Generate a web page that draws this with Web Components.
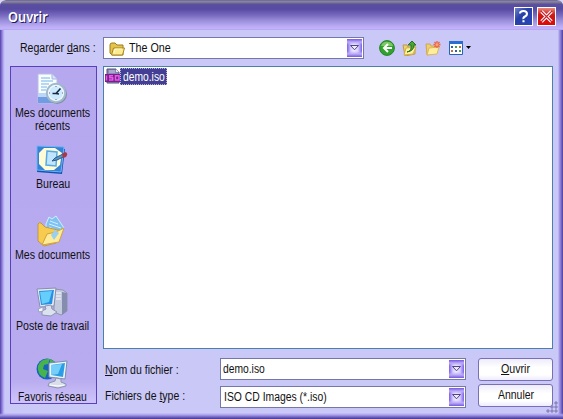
<!DOCTYPE html>
<html lang="fr"><head><meta charset="utf-8"><title>Ouvrir</title>
<style>html,body{margin:0;width:563px;height:419px;overflow:hidden;background:#d9d6f5}body{font:12.5px/13px "Liberation Sans",Arial,sans-serif;color:#111}</style></head><body>
<open-dialog></open-dialog>
<script>
const make=(name,html,init)=>customElements.define(name,class extends HTMLElement{
 connectedCallback(){if(this.shadowRoot)return;this.attachShadow({mode:'open'}).innerHTML=typeof html==='function'?html(this):html;if(init)init(this,this.shadowRoot)}
});
/* Text condensed to a given pixel width. */
make('fit-text','<style>:host{display:inline-block;white-space:nowrap;height:13px;text-align:left}span{display:inline-block;transform-origin:0 50%}</style><span><slot></slot></span>',(e,r)=>{
 const w=+e.getAttribute('w'),s=r.querySelector('span');e.style.width=w+'px';
 s.style.transform=`scaleX(${w/s.offsetWidth})`;
});
const icons={
recent:`<svg viewBox="0 0 32 32"><path d="M2 1h14l5 5v24H2z" fill="#fafdff" stroke="#b5bfe0"/><path d="M2 24h19v6H2z" fill="#6f9ce2"/><path d="M2 20h19v4H2z" fill="#bcd6f6"/><path d="M16 1v5h5" fill="#d5e5fa" stroke="#a5b7dd"/><path d="M5 5h9M5 8h12M5 11h8M5 14h6M5 17h5" stroke="#9fcbf0" stroke-width="1.5"/><circle cx="21" cy="21" r="10" fill="#828da5"/><circle cx="20" cy="20" r="9.2" fill="#eef7ff" stroke="#a0b9cd" stroke-width="2"/><circle cx="20" cy="20" r="6.7" fill="#cceafd"/><path d="M20 13v1m0 12v1m-7-7h1m12 0h1" stroke="#668"/><path d="M24.500 15.500 20 20.500h-3.500M20 20.500l3 .5" fill="none" stroke="#162a46" stroke-width="1.600"/></svg>`,
desk:`<svg viewBox="0 0 32 32"><path d="m2 3 27 2-3 25L1 28z" fill="#1155b0"/><path d="m1 2 27 1-3 25L1 26z" fill="#3581d8" stroke="#6fb4f3"/><path d="M8 4h11l7 5-2 12-6 5H9l-6-6V9z" fill="#fffbd2"/><path d="m11 7 10 1-1 14-10-1z" fill="#bfe5ff" stroke="#57a9e6" stroke-width="1.500"/><path d="m16 17 3-3 8-4 2 2-8 4z" fill="#5797cc" stroke="#315987"/><path d="m26 10 3-2q4 1 1 5l-3 1z" fill="#a43949"/></svg>`,
docs:`<svg viewBox="0 0 32 32"><path d="m10 9 3-7 3 2 4-3 8 12-9 11-9-3z" fill="#7fc1f0" stroke="#d1efff"/><path d="m14 6 8 3m-9 0 12 4m-12-1 11 5" stroke="#d6f0ff"/><path d="M2 9q1-2 3-1l4 4 17 4-6 12-12 3-6-5z" fill="#f6cb4e" stroke="#bd974f"/><path d="m6 30 5-11 9-2 8-4-5 14z" fill="#ffeb98" stroke="#d0a33b"/><path d="m15 20 4-5 4 3-5 7z" fill="#99cff0"/></svg>`,
pc:`<svg viewBox="0 0 32 32"><path d="m18 3 9 1 4 3v18l-6 4-7-3z" fill="#c4cade" stroke="#8e94b2"/><path d="m26 6 5 1v18l-5 4z" fill="#858dae"/><path d="M20 7h5m-5 3h5m-5 3h5" stroke="#f7f7ff"/><path d="m1 3 19-1-2 18-14 1z" fill="#e5eaf6" stroke="#878fae"/><path d="m3 5 15-1-2 14-11 1z" fill="#2490e4"/><path d="m4 6 12-1-3 11-7 2z" fill="#65cefa"/><path d="m9 20 6-1 1 4 5 3-6 4-9-1v-4l4-2z" fill="#dbe1ef" stroke="#8b96b0"/><path d="m2 23 5-2v4l-4 1z" fill="#f5f8ff" stroke="#99a2bf"/></svg>`,
net:`<svg viewBox="0 0 32 32"><circle cx="11" cy="12" r="10.500" fill="#1763bd"/><path d="M2 9q3-8 12-7l-2 5-4 1-1 4 5 2-3 7Q1 18 2 9zM14 2l5 3-5 3z" fill="#47b34d"/><path d="m13 6 18-2-2 18-16-2z" fill="#edf5fc" stroke="#7690ad"/><path d="m15 8 14-2-2 14-12-2z" fill="#2c9de4"/><path d="m15 8 11-1-4 10-7 1z" fill="#75cff8"/><path d="m20 21 5 1v3l5 2v2l-8 2-10-2 1-3 6-2z" fill="#d8deeb" stroke="#8b95ad"/><path d="m14 28 8 1 6-1" fill="none" stroke="#fff"/></svg>`,
folder:`<svg viewBox="0 0 16 16"><path d="M1 4q0-2 2-2h3l2 2h6v10H3L1 12z" fill="#e5c548" stroke="#9c7c25"/><path d="m2.500 14 2-7h11l-2 7z" fill="#fdeb8d" stroke="#a98327"/><path d="m5 12 1-4h7" stroke="#fff9ce" fill="none"/></svg>`,
iso:`<svg viewBox="0 0 16 16"><path d="M2 1h9l3 3v11H2z" fill="#8b86b3" stroke="#55517e"/><path d="M4 2h6v3H4z" fill="#aaa9cd"/><path d="M11 1v3h3" fill="#e6e4fb"/><path d="M0 6h16v8H0z" fill="#76208a"/><path d="M1.500 7.500v5M8 7.800H4.700v2h3v2.200H4M10.500 7.800H14V12h-3.500z" fill="none" stroke="#e95aeb" stroke-width="1.500"/></svg>`,
back:`<svg viewBox="0 0 16 16"><circle cx="8" cy="8" r="7.400" fill="#32a22e" stroke="#268426"/><path d="M2 6q2-5 7-4 4 0 5 4" fill="#78cb63"/><path d="M13 8H5m4-4L5 8l4 4" fill="none" stroke="#fff" stroke-width="2"/></svg>`,
up:`<svg viewBox="0 0 16 16"><path d="M1 5h4l1 2h7v7l-10 2z" fill="#ecd468" stroke="#c09a3b"/><path d="m2 15 2-7 10-1-3 7z" fill="#fff1a0" stroke="#cfaf49"/><path d="M5 12q5-1 4-7H6l4-4 4 4h-2q0 6-7 7z" fill="#49a62e" stroke="#28711c"/></svg>`,
neu:`<svg viewBox="0 0 16 16"><path d="M1 4h4l1 2h6v7l-10 2z" fill="#efcf69" stroke="#d0a650"/><path d="m2 15 2-7 10-1-2 7z" fill="#ffed9e" stroke="#dbb75e"/><path d="M12 1v7M8.500 4.500h7M9.500 2l5 5m0-5-5 5" stroke="#eb6247" stroke-width="1.300"/><circle cx="12" cy="4.500" r="1.500" fill="#f9a46d"/></svg>`,
view:`<svg viewBox="0 0 24 16"><path d="M1.500 1.500h13v13h-13z" fill="#fff" stroke="#2265bb"/><path d="M1 1h14v3H1z" fill="#286ed0"/><path d="M3 6h2v2H3zM7 10h2v2H7z" fill="#385ca0"/><path d="M7 6h2v2H7zM11 10h2v2h-2z" fill="#459e5d"/><path d="M11 6h2v2h-2zM3 10h2v2H3z" fill="#b27744"/><path d="M18 6h5L20.500 9z" fill="#000"/></svg>`,
help:`<svg viewBox="0 0 15 15"><path d="M4 4.500Q4 2 7.500 2T11 5q0 1.500-2 2.500T7.600 10M7.500 11.300v2" fill="none" stroke="#fff" stroke-width="2.100"/></svg>`,
close:`<svg viewBox="0 0 15 15"><path d="m2.500 2.500 10 10m0-10-10 10" stroke="#fff" stroke-width="3.200"/><path d="m2 2 11 11m0-11L2 13" stroke="#c52636" stroke-width="1.200"/></svg>`,
grip:`<svg viewBox="0 0 12 12"><path d="M9 1h2v2H9zM5 5h2v2H5zM9 5h2v2H9zM1 9h2v2H1zM5 9h2v2H5zM9 9h2v2H9z" fill="#b5aee5" stroke="#8179b6"/></svg>`
};
make('app-icon',e=>'<style>:host{display:block;width:16px;height:16px;flex:none}svg{display:block;width:100%;height:100%}</style>'+icons[e.getAttribute('name')]);
make('title-bar',`<style>:host{display:flex;box-sizing:border-box;height:30px;padding:7px 7px 0 8px;border-radius:6px 6px 0 0;background:linear-gradient(#5a5292 0,#8c88a6 1px,#77738f 3px,#5a4fa0 4px,#574aa2 9px,#7668bd 15px,#9d91dc 21px,#bdaef7 27px,#c1b2fa 29px,#ae9ee8 30px)}
b{flex:1;padding-top:3px;font:600 14px/13px "Noto Sans",sans-serif;color:#fff;text-shadow:1px 1px #24195f}
i{box-sizing:border-box;width:19px;height:19px;border:1px solid #fff;padding:1px;background:linear-gradient(135deg,#7182cd,#2741a5 40%,#2945b9)}i+i{margin-left:4px;background:linear-gradient(#e98a7c,#ce1a14 40%,#df0909)}app-icon{width:15px;height:15px}</style><b><fit-text w="40">Ouvrir</fit-text></b><i><app-icon name="help"></app-icon></i><i><app-icon name="close"></app-icon></i>`);
make('combo-box',`<style>:host{display:flex;box-sizing:border-box;align-items:center;border:1px solid #7378a9;background:#fff;height:22px;padding:1px 1px 1px 2px}div{display:flex;flex:1;align-items:center;gap:4px;padding-top:1px}
b{display:grid;place-items:center;width:15px;height:18px;background:linear-gradient(#7657df,#baa9f7 3px,#fff0 6px,#fff0 12px,#baa9f7 15px,#7657df),linear-gradient(90deg,#7c5de6,#d9d0ff 4px,#eeeaff 7px,#d9d0ff 11px,#7c5de6)}svg{display:block}</style><div><slot></slot></div><b><svg width="9" height="6"><path d="M.5 .5h8L4.500 4.800z" fill="#eeeaff" stroke="#514685"/></svg></b>`);
make('push-button',`<style>:host{display:flex;box-sizing:border-box;justify-content:center;align-items:center;height:23px;border:1px solid #7770b4;border-radius:3px;background:linear-gradient(#eeecfb,#fff 40%,#fff 75%,#eeebff)}</style><slot></slot>`);
make('place-item',e=>`<style>:host{display:flex;flex-direction:column;align-items:center;height:71px;flex:none;box-sizing:border-box;padding:5px 2px 0 0}app-icon{width:32px;height:32px;margin:1px 2px 2px 0}</style><app-icon name="${e.getAttribute('icon')}"></app-icon><slot></slot>`);
make('places-bar',`<style>:host{display:flex;flex-direction:column;box-sizing:border-box;width:87px;height:338px;border:1px solid #5a3fc1;background:linear-gradient(#b5a8ef 0,#b8abef 312px,#d0c6fc 338px);overflow:hidden}</style>
<place-item icon="recent"><fit-text w="75">Mes documents</fit-text><fit-text w="35">récents</fit-text></place-item>
<place-item icon="desk"><fit-text w="34">Bureau</fit-text></place-item><place-item icon="docs"><fit-text w="75">Mes documents</fit-text></place-item><place-item icon="pc"><fit-text w="73">Poste de travail</fit-text></place-item><place-item icon="net"><fit-text w="69">Favoris réseau</fit-text></place-item>`);
make('file-list',`<style>:host{display:block;box-sizing:border-box;border:1px solid #4c80aa;background:#fff;height:283px;padding:1px}div{display:flex}span{box-sizing:border-box;width:47px;height:17px;margin-left:-1px;padding:2px 1px 0 2px;background:#433f94;border:1px dotted #b8b4d8;color:#fff}</style><div><app-icon name="iso"></app-icon><span><fit-text w="42">demo.iso</fit-text></span></div>`);
make('open-dialog',`<style>:host{display:block;box-sizing:border-box;width:563px;height:419px;border-radius:6px 6px 0 0;background:linear-gradient(90deg,#5142a1,#8c7cdb 2px,#c4b9fa 4px,#c9c8f7 5px,#c9c8f7 558px,#aaa0e8 559px,#8172cf 561px,#4c3c9d);overflow:hidden}
main{box-sizing:border-box;height:389px;padding:7px 10px 0;background:linear-gradient(#c9c8f700 383px,#a89de9 385px,#7164c4 387px,#44358f 389px)}
.look{display:flex;height:29px;align-items:flex-start}.look>fit-text{margin:5px 7px 0 10px}.look combo-box{width:261px}.tools{display:flex;gap:7px;margin:3px 0 0 15px}.tools app-icon:last-child{width:24px}
.body{display:grid;grid-template-columns:87px 450px;gap:6px}.foot{display:grid;grid-template-columns:117px 246px 87px;margin-top:9px;grid-template-rows:26px 23px}.foot>fit-text{margin:6px 0 0 2px}push-button{margin-left:12px;width:75px}.low{margin-top:2px}
.grip{position:absolute;left:546px;top:401px;width:12px;height:12px}</style>
<title-bar></title-bar><main><div class="look"><fit-text w="76">Regarder <u>d</u>ans :</fit-text><combo-box><app-icon name="folder" style="margin-left:3px"></app-icon><fit-text w="42">The One</fit-text></combo-box><div class="tools"><app-icon name="back"></app-icon><app-icon name="up"></app-icon><app-icon name="neu"></app-icon><app-icon name="view"></app-icon></div></div>
<div class="body"><places-bar></places-bar><div><file-list></file-list><div class="foot"><fit-text w="74"><u>N</u>om du fichier :</fit-text><combo-box><fit-text w="42">demo.iso</fit-text></combo-box><push-button><fit-text w="29"><u>O</u>uvrir</fit-text></push-button>
<fit-text w="80">Fichiers de <u>t</u>ype :</fit-text><combo-box class="low"><fit-text w="103" style="margin-left:1px">ISO CD Images (*.iso)</fit-text></combo-box><push-button><fit-text w="36">Annuler</fit-text></push-button></div></div></div></main><app-icon class="grip" name="grip"></app-icon>`);
</script></body></html>
